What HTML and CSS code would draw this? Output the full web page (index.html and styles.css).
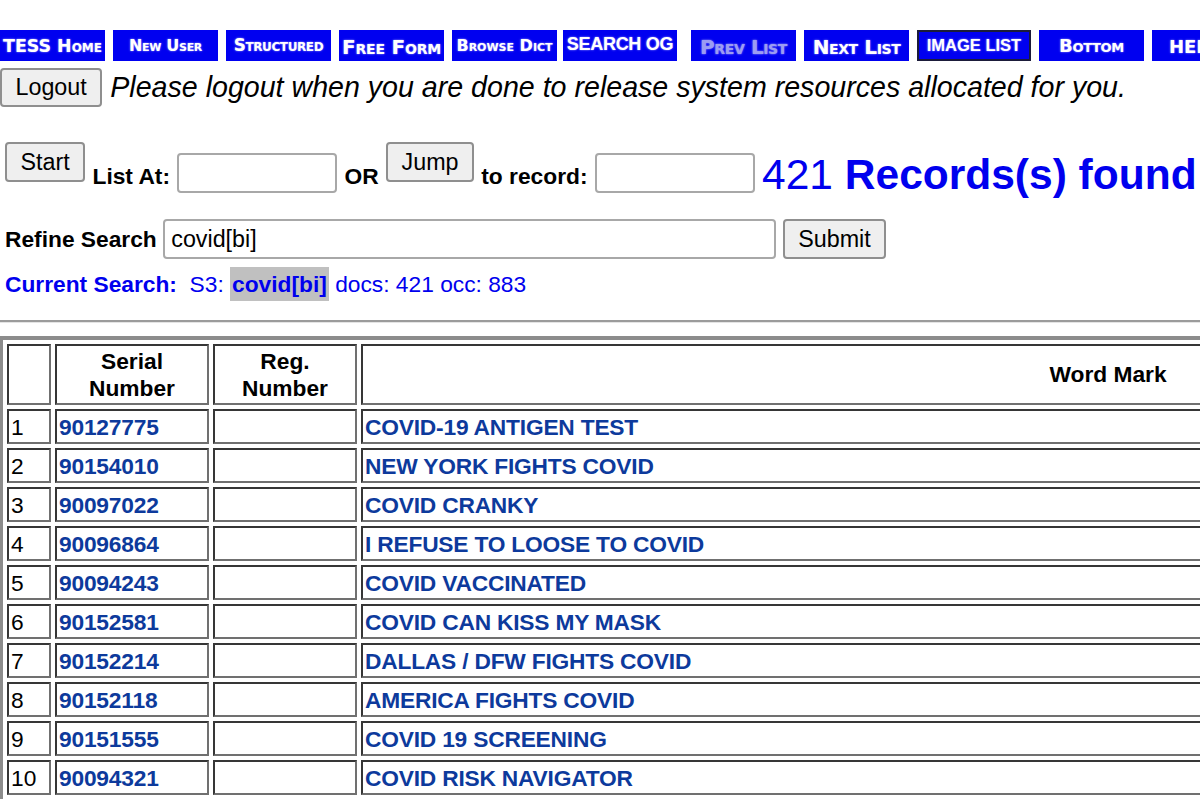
FILE: index.html
```html
<!DOCTYPE html>
<html>
<head>
<meta charset="utf-8">
<title>TESS -- Error</title>
<link rel="stylesheet" href="styles.css">
</head>
<body>
<nav class="nav">
  <span class="nb n-home">TESS Home</span>
  <span class="nb n-new">New User</span>
  <span class="nb n-str">Structured</span>
  <span class="nb n-free">Free Form</span>
  <span class="nb n-dict">Browse Dict</span>
  <span class="nb n-og">SEARCH OG</span>
  <span class="nb n-prev">Prev List</span>
  <span class="nb n-next">Next List</span>
  <span class="nb n-img">IMAGE LIST</span>
  <span class="nb n-bot">Bottom</span>
  <span class="nb n-help">HELP</span>
</nav>

<div class="logout-row">
  <button class="btn btn-logout">Logout</button>
  <span class="notice">Please logout when you are done to release system resources allocated for you.</span>
</div>

<div class="jump-row">
  <button class="btn">Start</button>
  <span class="lbl">List At:</span>
  <span class="inp"></span>
  <span class="lbl">OR</span>
  <button class="btn">Jump</button>
  <span class="lbl">to record:</span>
  <span class="inp"></span>
  <span class="found">421 <b>Records(s) found</b></span>
</div>

<div class="refine-row">
  <span class="lbl lbl-refine">Refine Search</span>
  <input class="refine-inp" type="text" value="covid[bi]">
  <button class="btn">Submit</button>
</div>

<div class="cur"><b>Current Search:</b>&nbsp; S3: <b class="hl">covid[bi]</b> docs: 421 occ: 883</div>

<div class="rule"></div>

<table class="res">
  <tr class="hrow">
    <th class="c1"></th>
    <th class="c2">Serial<br>Number</th>
    <th class="c3">Reg.<br>Number</th>
    <th class="c4">Word Mark</th>
  </tr>
  <tr><td>1</td><td><a class="lk" href="#">90127775</a></td><td></td><td><a class="lk" href="#">COVID-19 ANTIGEN TEST</a></td></tr>
  <tr><td>2</td><td><a class="lk" href="#">90154010</a></td><td></td><td><a class="lk" href="#">NEW YORK FIGHTS COVID</a></td></tr>
  <tr><td>3</td><td><a class="lk" href="#">90097022</a></td><td></td><td><a class="lk" href="#">COVID CRANKY</a></td></tr>
  <tr><td>4</td><td><a class="lk" href="#">90096864</a></td><td></td><td><a class="lk" href="#">I REFUSE TO LOOSE TO COVID</a></td></tr>
  <tr><td>5</td><td><a class="lk" href="#">90094243</a></td><td></td><td><a class="lk" href="#">COVID VACCINATED</a></td></tr>
  <tr><td>6</td><td><a class="lk" href="#">90152581</a></td><td></td><td><a class="lk" href="#">COVID CAN KISS MY MASK</a></td></tr>
  <tr><td>7</td><td><a class="lk" href="#">90152214</a></td><td></td><td><a class="lk" href="#">DALLAS / DFW FIGHTS COVID</a></td></tr>
  <tr><td>8</td><td><a class="lk" href="#">90152118</a></td><td></td><td><a class="lk" href="#">AMERICA FIGHTS COVID</a></td></tr>
  <tr><td>9</td><td><a class="lk" href="#">90151555</a></td><td></td><td><a class="lk" href="#">COVID 19 SCREENING</a></td></tr>
  <tr><td>10</td><td><a class="lk" href="#">90094321</a></td><td></td><td><a class="lk" href="#">COVID RISK NAVIGATOR</a></td></tr>
</table>
</body>
</html>
```

FILE: styles.css
```css
html {
  overflow: hidden;
}
body {
  margin: 0;
  font-family: "Liberation Sans", Arial, sans-serif;
  font-size: 22.75px;
  color: #000;
  background: #fff;
  overflow: hidden;
}

/* ---- nav image buttons ---- */
.nav {
  display: flex;
  gap: 8px;
  margin-top: 30px;
  height: 31px;
  white-space: nowrap;
}
.nb {
  flex: 0 0 105px;
  height: 31px;
  box-sizing: border-box;
  background: #0000f0;
  color: #fff;
  display: flex;
  align-items: center;
  justify-content: center;
  font-family: "DejaVu Sans", sans-serif;
  font-weight: bold;
  font-variant: small-caps;
  font-size: 17px;
  line-height: 1;
  text-shadow: 0 0 2px rgba(190, 190, 255, 0.9);
  overflow: hidden;
}
.n-home { font-size: 17.4px; padding-top: 2px; }
.n-new { font-size: 16px; letter-spacing: -0.3px; }
.n-str { font-size: 16.8px; letter-spacing: -0.4px; }
.n-free { font-size: 20px; padding-top: 3px; letter-spacing: -0.2px; }
.n-dict { font-size: 16px; }
.n-og {
  flex-basis: 114px;
  margin-left: -2px;
  font-family: "Liberation Sans", Arial, sans-serif;
  font-variant: normal;
  font-size: 18px;
  align-items: flex-start;
  padding-top: 5px;
  letter-spacing: -0.3px;
}
.n-prev { margin-left: 6px; font-size: 20px; color: #9c9cf2; padding-top: 3px; letter-spacing: -0.4px; }
.n-next { font-size: 20px; padding-top: 3px; letter-spacing: -0.4px; }
.n-img {
  flex-basis: 114px;
  font-family: "Liberation Sans", Arial, sans-serif;
  font-variant: normal;
  font-size: 16.5px;
  border: 2px solid #1b1b3a;
  align-items: flex-start;
  padding-top: 5px;
}
.n-bot { font-size: 18px; letter-spacing: -0.3px; }
.n-help {
  font-size: 18px;
  justify-content: flex-start;
  padding-left: 17px;
  padding-top: 2px;
}

/* ---- buttons / inputs ---- */
.btn {
  font-family: "Liberation Sans", Arial, sans-serif;
  font-size: 23.3px;
  line-height: 27px;
  color: #000;
  background: #efefef;
  border: 2px solid #8f8f8f;
  border-radius: 4px;
  padding: 0 13.5px;
  height: 40px;
  box-sizing: border-box;
  margin: 0;
  flex: 0 0 auto;
}
.btn-logout { height: 39px; }

.logout-row {
  display: flex;
  align-items: flex-start;
  margin-top: 7px;
  height: 39px;
  white-space: nowrap;
}
.notice {
  font-style: italic;
  font-size: 28.6px;
  line-height: 32px;
  margin: 3px 0 0 8px;
}

.jump-row {
  display: flex;
  align-items: flex-start;
  gap: 7.3px;
  margin-top: 35px;
  padding-left: 5px;
  white-space: nowrap;
}
.lbl {
  font-weight: bold;
  line-height: 26px;
  margin-top: 21px;
}
.inp {
  width: 160px;
  height: 40px;
  box-sizing: border-box;
  border: 2px solid #a8a8a8;
  border-radius: 4px;
  margin-top: 11px;
  background: #fff;
  flex: 0 0 auto;
}
.found {
  font-size: 42.5px;
  line-height: 48px;
  color: #0000ee;
  margin-top: 9px;
}

.refine-row {
  display: flex;
  align-items: flex-start;
  gap: 6.5px;
  margin-top: 20px;
  padding-left: 5px;
  white-space: nowrap;
}
.lbl-refine { margin-top: 7px; }
.refine-inp {
  width: 613px;
  height: 40px;
  box-sizing: border-box;
  border: 2px solid #a8a8a8;
  border-radius: 4px;
  padding: 0 6px;
  margin: 0;
  font-family: "Liberation Sans", Arial, sans-serif;
  font-size: 23.3px;
  color: #000;
  background: #fff;
}

.cur {
  margin-top: 9px;
  line-height: 33px;
  color: #0000ee;
  padding-left: 5px;
  white-space: nowrap;
}
.hl {
  background: #c0c0c0;
  padding: 4px 2px;
}

.rule {
  margin-top: 19px;
  height: 0;
  border-top: 2px solid #9b9b9b;
  border-bottom: 1px solid #e4e4e4;
}

/* ---- results table ---- */
.res {
  margin-top: 13px;
  border-collapse: separate;
  border-spacing: 4px;
  border-style: solid;
  border-color: #8c8c8c;
  border-width: 4px 0 0 3px;
  width: 1859px;
  table-layout: fixed;
}
.res th,
.res td {
  box-sizing: border-box;
  border: 2px solid;
  border-color: #363636 #707070 #707070 #363636;
  padding: 0 2px;
  font-size: 22.75px;
  white-space: nowrap;
}
.res th {
  font-weight: bold;
  line-height: 27px;
  text-align: center;
}
.res td {
  line-height: 26px;
}
.res tr { height: 35px; }
.res tr.hrow { height: 61px; }
.c1 { width: 44px; }
.c2 { width: 154px; }
.c3 { width: 144px; }
.c4 { width: 1494px; }
.lk {
  color: #0d3a9c;
  font-weight: bold;
  text-decoration: none;
  letter-spacing: -0.2px;
}
```
